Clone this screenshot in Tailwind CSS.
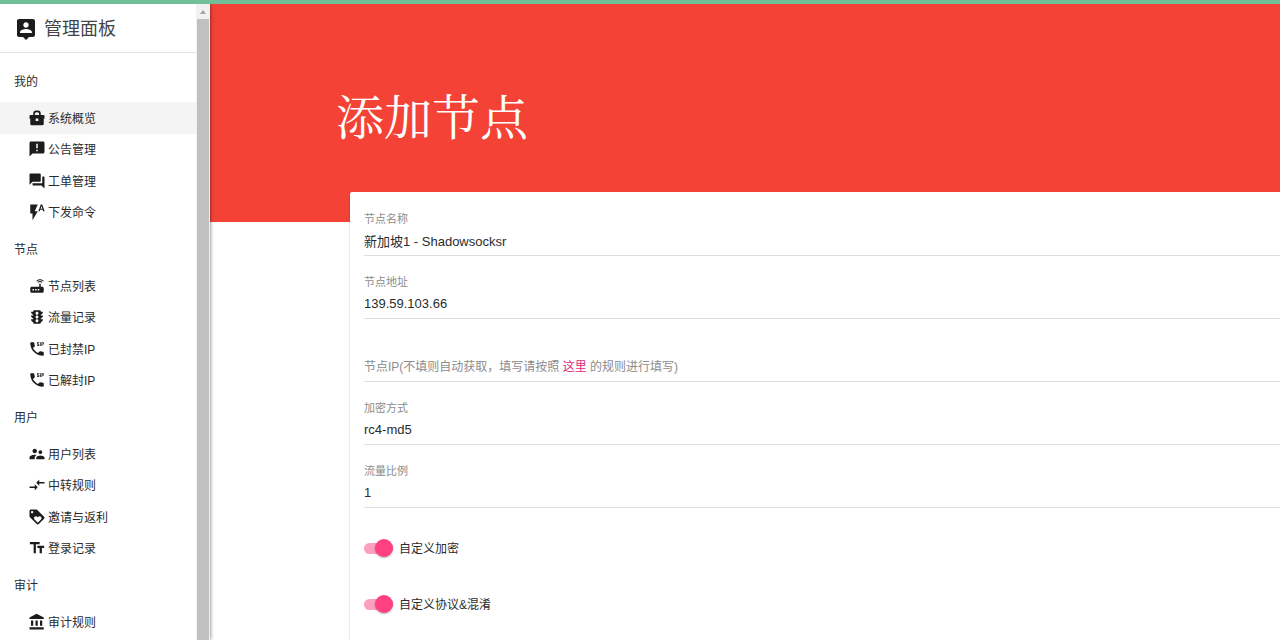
<!DOCTYPE html>
<html lang="zh-CN">
<head>
<meta charset="utf-8">
<meta name="viewport" content="width=device-width, initial-scale=1">
<title>添加节点</title>
<script src="https://cdn.jsdelivr.net/npm/@tailwindcss/browser@4"></script>
</head>
<body class="flex h-screen flex-col overflow-hidden bg-white font-['Liberation_Sans','Noto_Sans_CJK_SC',sans-serif] text-xs text-[#2b2b2b]">
<div class="relative z-20 h-1 shrink-0 bg-[#70bf97]"></div>
<div class="flex min-h-0 flex-1">

  <aside class="z-10 flex w-[210px] shrink-0 bg-white shadow-[0_0_4px_rgba(0,0,0,0.6)]">
    <div class="min-w-0 flex-1 overflow-hidden">
      <a href="#" class="flex h-[49px] items-center gap-1.5 border-b border-[#e4e4e4] pt-0.5 pl-3.5 text-lg text-[#444444]">
        <svg class="size-6 fill-[#1c1c1c]" viewBox="0 0 24 24"><path d="M19 2H5c-1.11 0-2 .9-2 2v14c0 1.1.89 2 2 2h4l3 3 3-3h4c1.1 0 2-.9 2-2V4c0-1.1-.9-2-2-2zm-7 3.3c1.49 0 2.7 1.21 2.7 2.7 0 1.49-1.21 2.7-2.7 2.7-1.49 0-2.7-1.21-2.7-2.7 0-1.49 1.21-2.7 2.7-2.7zM18 16H6v-.9c0-2 4-3.1 6-3.1s6 1.1 6 3.1v.9z"/></svg>
        <span>管理面板</span>
      </a>
      <nav class="pt-[7px]">
        <h2 class="flex h-[42px] items-center pt-0.5 pl-3.5">我的</h2>
        <ul class="grid h-[126px] grid-rows-4">
          <li class="grid"><a href="#" class="flex items-center gap-0.5 bg-[#f4f4f4] pt-0.5 pl-7"><svg class="mb-0.5 size-[18px] fill-[#1c1c1c]" viewBox="0 0 24 24"><path fill-rule="evenodd" d="M7 8V6a4 4 0 0 1 4-4h2a4 4 0 0 1 4 4v2h3.500a1.500 1.500 0 0 1 1.500 1.500V13h-1v6.500a2 2 0 0 1-2 2H5a2 2 0 0 1-2-2V13H2V9.500A1.500 1.500 0 0 1 3.500 8zM9.200 8h5.600V6.200a2 2 0 0 0-2-2h-1.600a2 2 0 0 0-2 2zM10.200 12.500v3.600h3.600v-3.600z"/></svg>系统概览</a></li>
          <li class="grid"><a href="#" class="flex items-center gap-0.5 pt-0.5 pl-7"><svg class="mb-0.5 size-[18px] fill-[#1c1c1c]" viewBox="0 0 24 24"><path d="M20 2H4c-1.1 0-1.99.9-1.99 2L2 22l4-4h14c1.1 0 2-.9 2-2V4c0-1.1-.9-2-2-2zm-7 9h-2V5h2v6zm0 4h-2v-2h2v2z"/></svg>公告管理</a></li>
          <li class="grid"><a href="#" class="flex items-center gap-0.5 pt-0.5 pl-7"><svg class="mb-0.5 size-[18px] fill-[#1c1c1c]" viewBox="0 0 24 24"><path d="M21 6h-2v9H6v2c0 .55.45 1 1 1h11l4 4V7c0-.55-.45-1-1-1zm-4 6V3c0-.55-.45-1-1-1H3c-.55 0-1 .45-1 1v14l4-4h10c.55 0 1-.45 1-1z"/></svg>工单管理</a></li>
          <li class="grid"><a href="#" class="flex items-center gap-0.5 pt-0.5 pl-7"><svg class="mb-0.5 size-[18px] fill-[#1c1c1c]" viewBox="0 0 24 24"><path d="M3 2v12h3v9l7-12H9l4-9H3zm16 0h-2l-3.2 9h1.9l.7-2h3.2l.7 2h1.9L19 2zm-2.15 5.65L18 4l1.15 3.65h-2.3z"/></svg>下发命令</a></li>
        </ul>
        <h2 class="flex h-[42px] items-center pt-0.5 pl-3.5">节点</h2>
        <ul class="grid h-[126px] grid-rows-4">
          <li class="grid"><a href="#" class="flex items-center gap-0.5 pt-0.5 pl-7"><svg class="mb-0.5 size-[18px] fill-[#1c1c1c]" viewBox="0 0 24 24"><path d="M20.2 5.9l.8-.8C19.6 3.7 17.8 3 16 3s-3.6.7-5 2.1l.8.8C13 4.8 14.5 4.2 16 4.2s3 .6 4.2 1.7zm-.9.8c-.9-.9-2.1-1.4-3.3-1.4s-2.4.5-3.3 1.4l.8.8c.7-.7 1.6-1 2.5-1 .9 0 1.8.3 2.5 1l.8-.8zM19 13h-2V9h-2v4H5c-1.1 0-2 .9-2 2v4c0 1.1.9 2 2 2h14c1.1 0 2-.9 2-2v-4c0-1.1-.9-2-2-2zM8 18H6v-2h2v2zm3.5 0h-2v-2h2v2zm3.5 0h-2v-2h2v2z"/></svg>节点列表</a></li>
          <li class="grid"><a href="#" class="flex items-center gap-0.5 pt-0.5 pl-7"><svg class="mb-0.5 size-[18px] fill-[#1c1c1c]" viewBox="0 0 24 24"><path d="M20 10h-3V8.86c1.72-.45 3-2 3-3.86h-3V4c0-.55-.45-1-1-1H8c-.55 0-1 .45-1 1v1H4c0 1.86 1.28 3.41 3 3.86V10H4c0 1.86 1.28 3.41 3 3.86V15H4c0 1.86 1.28 3.41 3 3.86V20c0 .55.45 1 1 1h8c.55 0 1-.45 1-1v-1.14c1.72-.45 3-2 3-3.86h-3v-1.14c1.72-.45 3-2 3-3.86zm-8 9c-1.11 0-2-.9-2-2s.89-2 2-2c1.1 0 2 .9 2 2s-.89 2-2 2zm0-5c-1.11 0-2-.9-2-2s.89-2 2-2c1.1 0 2 .9 2 2s-.89 2-2 2zm0-5c-1.11 0-2-.9-2-2 0-1.11.89-2 2-2 1.1 0 2 .89 2 2 0 1.1-.89 2-2 2z"/></svg>流量记录</a></li>
          <li class="grid"><a href="#" class="flex items-center gap-0.5 pt-0.5 pl-7"><svg class="mb-0.5 size-[18px] fill-[#1c1c1c]" viewBox="0 0 24 24"><path d="M17 3h-1v5h1V3zm-2 2h-2V4h2V3h-3v3h2v1h-2v1h3V5zm3-2v5h1V6h2V3h-3zm2 2h-1V4h1v1zm0 10.5c-1.25 0-2.45-.2-3.57-.57-.35-.11-.74-.03-1.01.24l-2.2 2.2c-2.83-1.44-5.15-3.75-6.59-6.59l2.2-2.21c.27-.26.35-.65.24-1C8.7 6.45 8.5 5.25 8.5 4c0-.55-.45-1-1-1H4c-.55 0-1 .45-1 1 0 9.39 7.61 17 17 17 .55 0 1-.45 1-1v-3.5c0-.55-.45-1-1-1z"/></svg>已封禁IP</a></li>
          <li class="grid"><a href="#" class="flex items-center gap-0.5 pt-0.5 pl-7"><svg class="mb-0.5 size-[18px] fill-[#1c1c1c]" viewBox="0 0 24 24"><path d="M17 3h-1v5h1V3zm-2 2h-2V4h2V3h-3v3h2v1h-2v1h3V5zm3-2v5h1V6h2V3h-3zm2 2h-1V4h1v1zm0 10.5c-1.25 0-2.45-.2-3.57-.57-.35-.11-.74-.03-1.01.24l-2.2 2.2c-2.83-1.44-5.15-3.75-6.59-6.59l2.2-2.21c.27-.26.35-.65.24-1C8.7 6.45 8.5 5.25 8.5 4c0-.55-.45-1-1-1H4c-.55 0-1 .45-1 1 0 9.39 7.61 17 17 17 .55 0 1-.45 1-1v-3.5c0-.55-.45-1-1-1z"/></svg>已解封IP</a></li>
        </ul>
        <h2 class="flex h-[42px] items-center pt-0.5 pl-3.5">用户</h2>
        <ul class="grid h-[126px] grid-rows-4">
          <li class="grid"><a href="#" class="flex items-center gap-0.5 pt-0.5 pl-7"><svg class="mb-0.5 size-[18px] fill-[#1c1c1c]" viewBox="0 0 24 24"><path d="M16.5 12c1.38 0 2.49-1.12 2.49-2.5S17.88 7 16.5 7C15.12 7 14 8.12 14 9.5s1.12 2.5 2.5 2.5zM9 11c1.66 0 2.99-1.34 2.99-3S10.66 5 9 5C7.34 5 6 6.34 6 8s1.34 3 3 3zm7.5 3c-1.83 0-5.5.92-5.5 2.75V19h11v-2.25c0-1.83-3.67-2.75-5.5-2.75zM9 13c-2.33 0-7 1.17-7 3.500V19h7v-2.250c0-.85.33-2.340 2.370-3.470C10.500 13.100 9.660 13 9 13z"/></svg>用户列表</a></li>
          <li class="grid"><a href="#" class="flex items-center gap-0.5 pt-0.5 pl-7"><svg class="mb-0.5 size-[18px] fill-[#1c1c1c]" viewBox="0 0 24 24"><path d="M9.01 14H2v2h7.01v3L13 15l-3.99-4v3zm5.98-1v-3H22V8h-7.01V5L11 9l3.99 4z"/></svg>中转规则</a></li>
          <li class="grid"><a href="#" class="flex items-center gap-0.5 pt-0.5 pl-7"><svg class="mb-0.5 size-[18px] fill-[#1c1c1c]" viewBox="0 0 24 24"><path d="M21.41 11.58l-9-9C12.05 2.22 11.55 2 11 2H4c-1.1 0-2 .9-2 2v7c0 .55.22 1.05.59 1.42l9 9c.36.36.86.58 1.41.58.55 0 1.05-.22 1.41-.59l7-7c.37-.36.59-.86.59-1.41 0-.55-.23-1.06-.59-1.42zM5.5 7C4.67 7 4 6.33 4 5.5S4.67 4 5.5 4 7 4.67 7 5.5 6.33 7 5.5 7zm11.77 8.27L13 19.54l-4.27-4.27C8.28 14.81 8 14.19 8 13.5c0-1.38 1.12-2.5 2.5-2.5.69 0 1.32.28 1.77.74l.73.72.73-.73c.45-.45 1.08-.73 1.77-.73 1.38 0 2.5 1.12 2.5 2.5 0 .69-.28 1.32-.73 1.77z"/></svg>邀请与返利</a></li>
          <li class="grid"><a href="#" class="flex items-center gap-0.5 pt-0.5 pl-7"><svg class="mb-0.5 size-[18px] fill-[#1c1c1c]" viewBox="0 0 24 24"><path d="M2.5 4v3h5v12h3V7h5V4h-13zm19 5h-9v3h3v7h3v-7h3V9z"/></svg>登录记录</a></li>
        </ul>
        <h2 class="flex h-[42px] items-center pt-0.5 pl-3.5">审计</h2>
        <ul>
          <li class="grid h-8"><a href="#" class="flex items-center gap-0.5 pt-0.5 pl-7"><svg class="mb-0.5 size-[18px] fill-[#1c1c1c]" viewBox="0 0 24 24"><path d="M4 10v7h3v-7H4zm6 0v7h3v-7h-3zM2 22h19v-3H2v3zm14-12v7h3v-7h-3zm-4.5-9L2 6v2h19V6l-9.5-5z"/></svg>审计规则</a></li>
        </ul>
      </nav>
    </div>
    <!-- scrollbar -->
    <div class="flex w-3.5 flex-col items-center bg-[#f1f1f1]" aria-hidden="true">
      <svg class="h-[15px] w-2 shrink-0 fill-[#a3a3a3]" viewBox="0 0 8 15"><path d="M1 10L4 6l3 4z"/></svg>
      <div class="w-3 flex-1 bg-[#c0c0c0]"></div>
    </div>
  </aside>

  <main class="min-w-0 flex-1">
    <header class="h-[218px] bg-[#f44336] pt-[75px] pl-[126px]">
      <h1 class="font-['Noto_Serif_CJK_SC','Noto_Sans_CJK_SC',serif] text-5xl leading-[72px] font-normal text-white">添加节点</h1>
    </header>
    <form class="-mt-[30px] ml-[140px] min-h-[460px] rounded-tl-xs bg-white pt-px pl-3.5 shadow-[0_1px_2px_rgba(0,0,0,0.3)]">
      <div class="flex h-[63px] flex-col border-b border-[#dedede] pt-[18px]">
        <label for="name" class="text-[11px] leading-4 text-[#8c8c8c]">节点名称</label>
        <input id="name" type="text" value="新加坡1 - Shadowsocksr" class="h-[26px] w-full text-[13px] outline-none">
      </div>
      <div class="flex h-[63px] flex-col border-b border-[#dedede] pt-[18px]">
        <label for="server" class="text-[11px] leading-4 text-[#8c8c8c]">节点地址</label>
        <input id="server" type="text" value="139.59.103.66" class="h-[26px] w-full text-[13px] outline-none">
      </div>
      <div class="flex h-[63px] items-end border-b border-[#dedede] pb-px">
        <label for="ip" class="leading-[26px] text-[#8c8c8c]">节点IP(不填则自动获取，填写请按照 <a href="#" class="text-[#e0267c]">这里</a> 的规则进行填写)</label>
        <input id="ip" type="text" class="h-[26px] min-w-0 flex-1 text-[13px] outline-none">
      </div>
      <div class="flex h-[63px] flex-col border-b border-[#dedede] pt-[18px]">
        <label for="method" class="text-[11px] leading-4 text-[#8c8c8c]">加密方式</label>
        <input id="method" type="text" value="rc4-md5" class="h-[26px] w-full text-[13px] outline-none">
      </div>
      <div class="flex h-[63px] flex-col border-b border-[#dedede] pt-[18px]">
        <label for="rate" class="text-[11px] leading-4 text-[#8c8c8c]">流量比例</label>
        <input id="rate" type="text" value="1" class="h-[26px] w-full text-[13px] outline-none">
      </div>
      <div class="pt-3">
        <div class="flex h-14 items-center gap-1.5">
          <input id="custom-method" type="checkbox" checked class="relative h-[11px] w-[29px] appearance-none rounded-full bg-[#ff9fbf] before:absolute before:-top-[4px] before:right-0 before:size-[18px] before:rounded-full before:bg-[#ff4081] before:shadow-[0_1px_2px_rgba(0,0,0,0.3)]">
          <label for="custom-method" class="pt-0.5">自定义加密</label>
        </div>
        <div class="flex h-14 items-center gap-1.5">
          <input id="custom-rss" type="checkbox" checked class="relative h-[11px] w-[29px] appearance-none rounded-full bg-[#ff9fbf] before:absolute before:-top-[4px] before:right-0 before:size-[18px] before:rounded-full before:bg-[#ff4081] before:shadow-[0_1px_2px_rgba(0,0,0,0.3)]">
          <label for="custom-rss" class="pt-0.5">自定义协议&amp;混淆</label>
        </div>
      </div>
    </form>
  </main>
</div>
</body>
</html>
